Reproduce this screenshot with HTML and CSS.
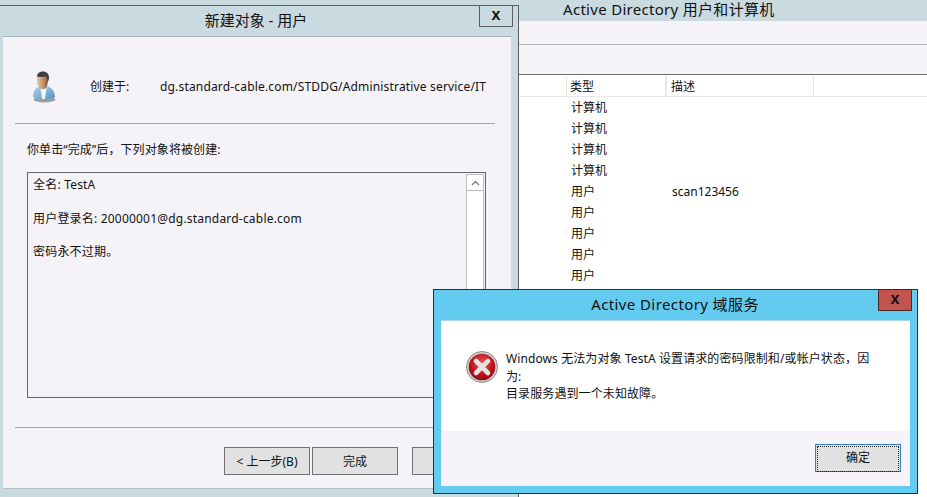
FILE: index.html
```html
<!DOCTYPE html>
<html lang="zh-CN">
<head>
<meta charset="utf-8">
<title>Active Directory</title>
<link rel="stylesheet" href="styles.css">
</head>
<body>
<section class="aduc">
  <h1 class="aduc-title">Active Directory 用户和计算机</h1>
  <div class="aduc-menu"></div>
  <div class="aduc-tools"></div>
  <div class="list-head">
    <div class="head-cell type">类型</div>
    <div class="head-cell desc">描述</div>
  </div>
  <div class="list">
    <div class="row"><span class="type-cell">计算机</span></div>
    <div class="row"><span class="type-cell">计算机</span></div>
    <div class="row"><span class="type-cell">计算机</span></div>
    <div class="row"><span class="type-cell">计算机</span></div>
    <div class="row"><span class="type-cell">用户</span><span>scan123456</span></div>
    <div class="row"><span class="type-cell">用户</span></div>
    <div class="row"><span class="type-cell">用户</span></div>
    <div class="row"><span class="type-cell">用户</span></div>
    <div class="row"><span class="type-cell">用户</span></div>
  </div>
</section>

<section class="wizard">
  <div class="wizard-bar">
    <h2 class="wizard-title">新建对象 - 用户</h2>
    <div class="close">x</div>
  </div>
  <div class="wizard-body">
    <div class="created">
      <svg class="user-icon" width="24" height="32" viewBox="0 0 24 32">
        <defs>
          <linearGradient id="skin" x1="0" x2="1" y1="0" y2="0">
            <stop offset="0" stop-color="#eec6a4"/><stop offset=".6" stop-color="#c08e68"/><stop offset="1" stop-color="#7d543a"/>
          </linearGradient>
          <linearGradient id="shirt" x1="0" x2="1" y1="0" y2="1">
            <stop offset="0" stop-color="#a9d2ee"/><stop offset="1" stop-color="#5a90bd"/>
          </linearGradient>
        </defs>
        <ellipse cx="12.500" cy="28.500" rx="11" ry="3" fill="#7f8285" opacity=".75"/>
        <path d="M1 26c0-5 2-9 6-10.500l4 1 5-1c4 1.500 7 5 7 10.500-3 3.500-19 3.500-22 0z" fill="url(#shirt)"/>
        <path d="M8.500 17l1.500 11h3l1.500-11-3 1z" fill="#eef4f8"/>
        <path d="M5 5c-.5 5 .5 10 3.500 12.500 2 1.500 5 .5 6-1.500 1-2 2-6 1.500-10.500z" fill="url(#skin)"/>
        <path d="M5 5.500C5 2 8 .5 11 .5c3.500 0 6.500 2.500 6 7-.2 1.300-.7 2.500-1 3.200-.2-2.700-.7-4.200-2.200-5C11 5.500 7.500 6.500 5 5.500z" fill="#3f3f3d"/>
      </svg>
      <span class="created-label">创建于:</span>
      <span class="created-path">dg.standard-cable.com/STDDG/Administrative service/IT</span>
    </div>
    <div class="rule"></div>
    <p class="intro">你单击“完成”后，下列对象将被创建:</p>
    <div class="summary">
      <div class="summary-text">
        <p class="line">全名: TestA</p>
        <p class="line">用户登录名: 20000001@dg.standard-cable.com</p>
        <p class="line">密码永不过期。</p>
      </div>
      <div class="scrollbar">
        <div class="scroll-up">
          <svg width="9" height="6" viewBox="0 0 9 6"><path d="M1 5l3.500-3.500L8 5" fill="none" stroke="#808080" stroke-width="1.500"/></svg>
        </div>
      </div>
    </div>
    <div class="rule rule-bottom"></div>
    <div class="wizard-actions">
      <div class="btn">&lt; 上一步(B)</div>
      <div class="btn">完成</div>
      <div class="btn btn-cancel"></div>
    </div>
  </div>
</section>

<section class="alert">
  <div class="alert-bar">
    <h2 class="alert-title">Active Directory 域服务</h2>
    <div class="alert-close">x</div>
  </div>
  <div class="alert-main">
    <svg class="error-icon" width="32" height="32" viewBox="0 0 32 32">
      <defs>
        <radialGradient id="red" cx=".5" cy=".35" r=".7">
          <stop offset="0" stop-color="#e8555a"/><stop offset=".65" stop-color="#b80f17"/><stop offset="1" stop-color="#8a0b10"/>
        </radialGradient>
      </defs>
      <circle cx="16" cy="16" r="15.500" fill="#d2d2d2" stroke="#8b8b8b"/>
      <circle cx="16" cy="16" r="13.300" fill="url(#red)"/>
      <path d="M10 10l12 12M22 10L10 22" stroke="#e6e2e2" stroke-width="4.600" stroke-linecap="round"/>
    </svg>
    <p class="alert-msg">Windows 无法为对象 TestA 设置请求的密码限制和/或帐户状态，因<br>为:<br>目录服务遇到一个未知故障。</p>
  </div>
  <div class="alert-foot">
    <div class="btn btn-default"><span class="focus">确定</span></div>
  </div>
</section>
</body>
</html>
```
FILE: styles.css
```css
html, body {
  margin: 0;
  padding: 0;
}
body {
  position: relative;
  width: 927px;
  height: 497px;
  overflow: hidden;
  background: #fff;
  color: #111;
  font-family: "Noto Sans", "Noto Sans CJK SC", sans-serif;
  font-size: 12px;
  line-height: 17px;
}
h1, h2, p {
  margin: 0;
  font-weight: 400;
}

/* background window */
.aduc {
  position: absolute;
  left: 519px;
  top: 0;
  width: 408px;
  height: 497px;
  display: flex;
  flex-direction: column;
}
.aduc-title {
  height: 21px;
  margin-left: -519px;
  padding-left: 563px;
  background: #c9dae1;
  font-size: 15px;
  letter-spacing: .3px;
  line-height: 19px;
}
.aduc-menu {
  height: 23px;
  background: #f5f3f7;
  border-bottom: 1px solid #b4b4b4;
}
.aduc-tools {
  height: 29px;
  background: #f5f3f7;
  border-bottom: 1px solid #6f6f72;
}
.list-head {
  display: flex;
  height: 21px;
  margin-top: 1px;
  padding-left: 47px;
  border-bottom: 1px solid #e8e8e8;
  box-sizing: border-box;
}
.head-cell {
  height: 20px;
  padding-left: 3px;
  box-sizing: border-box;
  border-left: 1px solid #e8e8e8;
  border-right: 1px solid #e8e8e8;
  line-height: 22px;
}
.type { width: 100px; }
.desc { width: 148px; padding-left: 4px; }
.row {
  display: flex;
  height: 21px;
  line-height: 21px;
  padding-left: 52px;
}
.type-cell { width: 101px; }

/* wizard window */
.wizard {
  position: absolute;
  left: 0;
  top: 5px;
  width: 518px;
  height: 492px;
  background: #c9dae1;
  border-top: 1px solid #5a5f62;
  border-right: 1px solid #5a5f62;
  display: flex;
  flex-direction: column;
}
.wizard-bar {
  position: relative;
  height: 30px;
  flex: none;
  text-align: center;
}
.wizard-title {
  font-size: 15px;
  line-height: 29px;
  padding-right: 6px;
}
.close, .alert-close {
  position: absolute;
  top: 0;
  width: 34px;
  height: 21px;
  box-sizing: border-box;
  text-align: center;
  font-family: "Liberation Sans", sans-serif;
  font-weight: 700;
  font-size: 16px;
  line-height: 18px;
}
.close {
  right: 5px;
  border: 1px solid #5a5f62;
  border-top: 0;
}
.wizard-body {
  width: 508px;
  height: 453px;
  margin-left: 3px;
  box-sizing: border-box;
  background: #f5f3f7;
  border-top: 1px solid #a8b4bb;
  border-bottom: 1px solid #b5c1c6;
  display: flex;
  flex-direction: column;
}
.created {
  display: flex;
  align-items: center;
  height: 86px;
  padding-left: 29px;
  padding-top: 13px;
  box-sizing: border-box;
}
.user-icon { flex: none; }
.created-label {
  flex: none;
  width: 70px;
  margin-left: 34px;
}
.created-path {
  width: 328px;
  overflow: hidden;
  white-space: nowrap;
  letter-spacing: .17px;
}
.rule {
  height: 1px;
  flex: none;
  margin-left: 12px;
  width: 480px;
  background: #a3a3a6;
}
.intro {
  margin: 17px 0 14px 24px;
  letter-spacing: .1px;
}
.summary {
  display: flex;
  width: 459px;
  height: 226px;
  margin-left: 24px;
  box-sizing: border-box;
  border: 1px solid #66666a;
  flex: none;
}
.summary-text {
  flex: 1;
  padding: 3px 0 0 5px;
  letter-spacing: .2px;
}
.line {
  height: 33.700px;
  line-height: 17px;
}
.scrollbar {
  width: 18px;
  height: 100%;
  margin: 1px 1px 0 0;
  box-sizing: border-box;
  background: #fff;
  border-left: 1px solid #bdbdbd;
  border-right: 1px solid #bdbdbd;
  border-top: 1px solid #bdbdbd;
}
.scroll-up {
  height: 15px;
  display: flex;
  align-items: center;
  justify-content: center;
  border-bottom: 1px solid #bdbdbd;
}
.rule-bottom {
  margin-top: 29px;
  width: 496px;
}
.wizard-actions {
  display: flex;
  margin: 19px 0 0 221px;
}
.btn {
  flex: none;
  width: 86px;
  height: 28px;
  box-sizing: border-box;
  border: 1px solid #707070;
  background: #e1e1e1;
  text-align: center;
  line-height: 27px;
  margin-right: 2px;
}
.btn-cancel {
  margin-left: 12px;
}

/* alert */
.alert {
  position: absolute;
  left: 433px;
  top: 289px;
  width: 485px;
  height: 205px;
  box-sizing: border-box;
  background: #63cbef;
  border: 1px solid #2a2f33;
  display: flex;
  flex-direction: column;
}
.alert-bar {
  position: relative;
  height: 30px;
  flex: none;
  text-align: center;
}
.alert-title {
  font-size: 15px;
  letter-spacing: .4px;
  line-height: 29px;
  padding-right: 1px;
}
.alert-close {
  right: 5px;
  background: #c1544f;
  border: 1px solid #4a2a28;
  border-top: 0;
  color: #111;
}
.alert-main {
  flex: none;
  margin: 0 7px;
  height: 111px;
  box-sizing: border-box;
  background: #fff;
  border-top: 1px solid #a9d5e6;
  display: flex;
  padding: 30px 0 0 25px;
}
.error-icon { flex: none; }
.alert-msg {
  margin: -1px 0 0 8px;
  width: 400px;
  line-height: 17.500px;
  letter-spacing: .1px;
}
.alert-foot {
  flex: none;
  margin: 0 7px;
  height: 55px;
  background: #f5f3f7;
  display: flex;
  justify-content: flex-end;
  padding: 13px 9px 0 0;
  box-sizing: border-box;
}
.btn-default {
  margin: 0;
  border: 1px solid #3c7fb1;
  padding: 1px;
  line-height: 22px;
  height: 28px;
}
.focus {
  display: block;
  height: 24px;
  border: 1px dotted #222;
}
```
